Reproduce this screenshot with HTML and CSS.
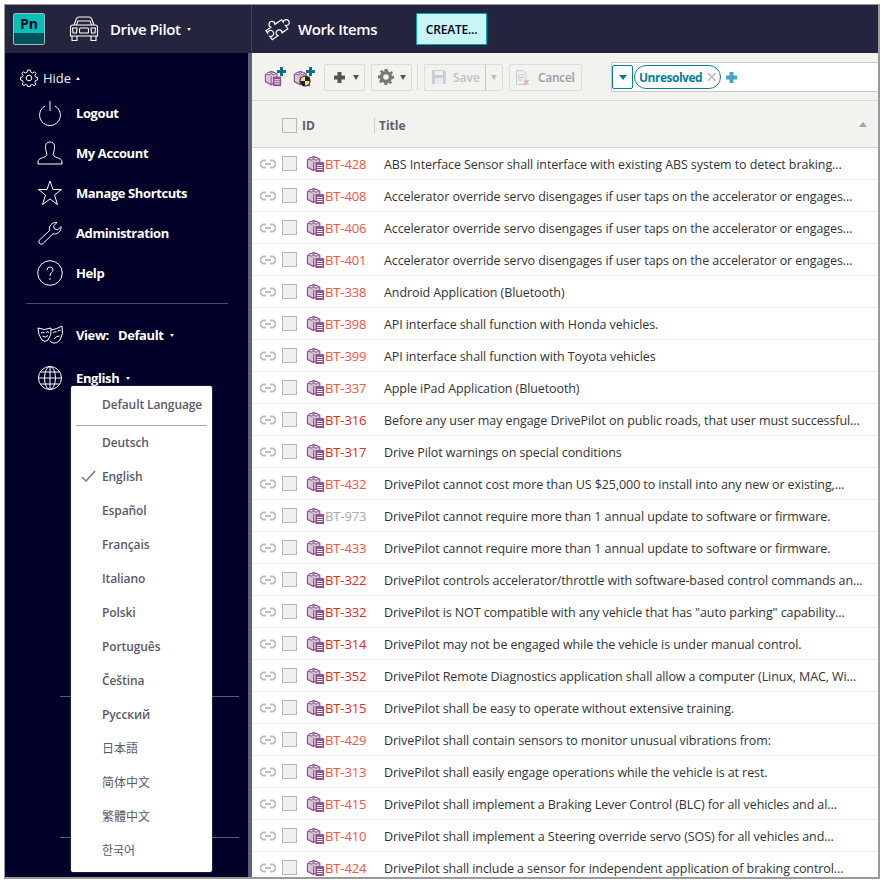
FILE: index.html
```html
<!DOCTYPE html>
<html lang="en">

<head>
    <meta charset="UTF-8">
    <title>Work Items</title>
    <link rel="stylesheet" href="styles.css">
</head>

<body>
    <svg class="defs" width="0" height="0">
        <symbol id="block" viewBox="0 0 20 20">
            <path d="M1.5 6 L8 2.5 L14.5 5.5 V13 L8 17.5 L1.5 14 Z" fill="#d9c4da" stroke="#8a4f8c" stroke-width="1.2" />
            <ellipse cx="5.5" cy="5" rx="2.3" ry="1.4" fill="#eadfeb" stroke="#8a4f8c" />
            <ellipse cx="10.5" cy="5" rx="2.3" ry="1.4" fill="#eadfeb" stroke="#8a4f8c" />
            <path d="M8 8 V17" stroke="#8a4f8c" />
            <rect x="10" y="8.5" width="9" height="10.5" fill="#8a4f8c" />
            <path d="M11.5 12 H17.5 M11.5 14.2 H17.5 M11.5 16.4 H17.5" stroke="#fff" />
        </symbol>
        <symbol id="link" viewBox="0 0 16 10">
            <path d="M6 1.5 H4 A3.2 3.2 0 0 0 4 8.5 H6 M10 1.5 H12 A3.2 3.2 0 0 1 12 8.5 H10 M5 5 H11" fill="none" stroke="#bdbdbd" stroke-width="2" />
        </symbol>
    </svg>

    <div class="frame">
        <header class="topbar">
            <div class="top_left">
                <div class="logo"><span>Pn</span></div>
                <svg class="car" width="30" height="26" viewBox="0 0 30 26" fill="none" stroke="#fff" stroke-width="1.1">
                    <path d="M5 9 L7.500 2.500 Q8 1 10 1 H20 Q22 1 22.500 2.500 L25 9" />
                    <path d="M1.500 11 Q1.500 9 4 9 H26 Q28.500 9 28.500 11 V20 H1.500 Z" />
                    <path d="M3 20 V24.500 H8 V20 M22 20 V24.500 H27 V20 M7.500 9 L9 5 H21 L22.500 9" />
                    <path d="M3.500 12 H8 L7.500 17 H4 Z M26.500 12 H22 L22.500 17 H26 Z" />
                    <rect x="10.500" y="12" width="9" height="5" rx="1" />
                </svg>
                <span class="project">Drive Pilot</span>
                <i class="caret"></i>
            </div>
            <div class="top_right">
                <svg width="30" height="28" viewBox="0 0 30 28" fill="none" stroke="#fff" stroke-width="1.200">
                    <path transform="rotate(-35 15 14)" d="M5 9 H11 a3 3 0 1 1 5 0 H24 V12 a3 3 0 1 1 0 4 V20 H17 a3 3 0 1 0 -5 0 H5 V16 a3 3 0 1 0 0 -4 Z" />
                </svg>
                <span class="page_title">Work Items</span>
                <button class="btn_create">CREATE...</button>
            </div>
        </header>

        <div class="body">
            <nav class="sidebar">
                <div class="nav_inner">
                    <div class="hide_row">
                        <svg width="18" height="18" viewBox="0 0 18 18" fill="none" stroke="#fff" stroke-width="1">
                            <circle cx="9" cy="9" r="2.8" />
                            <path d="M7.6 1 H10.4 L10.9 3.3 L12.6 4 L14.6 2.8 L16.2 4.6 L14.9 6.5 L15.6 8 L17.5 8.6 V11 L15.4 11.6 L14.8 13.2 L15.9 15.2 L14 16.6 L12.2 15.3 L10.7 16 L10.3 17.5 H7.7 L7.3 16 L5.8 15.3 L4 16.6 L2.1 15.2 L3.2 13.2 L2.6 11.6 L.5 11 V8.6 L2.4 8 L3.1 6.5 L1.8 4.6 L3.4 2.8 L5.4 4 L7.1 3.3 Z" />
                        </svg>
                        <span>Hide</span>
                        <i class="caret caret_up"></i>
                    </div>

                    <a class="nav_item" href="#">
                        <span class="nav_icon">
                            <svg width="24" height="26" viewBox="0 0 24 26" fill="none" stroke="#fff" stroke-width="1">
                                <path d="M7 6 A10.4 10.4 0 1 0 17 6" />
                                <path d="M12 1 V11" />
                            </svg>
                        </span>
                        Logout
                    </a>
                    <a class="nav_item" href="#">
                        <span class="nav_icon">
                            <svg width="26" height="24" viewBox="0 0 26 24" fill="none" stroke="#fff" stroke-width="1">
                                <path d="M13 1 C8 1 8 6 9 10 C10 13 10 14 9 15 C7 17 1 17 1 21 V23 H25 V21 C25 17 19 17 17 15 C16 14 16 13 17 10 C18 6 18 1 13 1 Z" />
                            </svg>
                        </span>
                        My Account
                    </a>
                    <a class="nav_item" href="#">
                        <span class="nav_icon">
                            <svg width="24" height="26" viewBox="0 0 24 26" fill="none" stroke="#fff" stroke-width="1">
                                <path d="M12 1 L15 9.5 H23.5 L16.5 15 L19.5 24.5 L12 19 L4.5 24.5 L7.5 15 L.5 9.5 H9 Z" />
                            </svg>
                        </span>
                        Manage Shortcuts
                    </a>
                    <a class="nav_item" href="#">
                        <span class="nav_icon">
                            <svg width="24" height="24" viewBox="0 0 24 24" fill="none" stroke="#fff" stroke-width="1">
                                <path d="M1 19.5 L11.5 9.5 C10.5 5 14 1 19 1.5 L15.5 5 L16.5 8 L19.5 9 L23 5.5 C23.5 10 19.5 14 15 12.8 L4.5 23 Q3 23.5 1.5 22.5 Q.5 21 1 19.5 Z" />
                            </svg>
                        </span>
                        Administration
                    </a>
                    <a class="nav_item" href="#">
                        <span class="nav_icon">
                            <svg width="26" height="26" viewBox="0 0 26 26" fill="none" stroke="#fff" stroke-width="1">
                                <circle cx="13" cy="13" r="12.3" />
                                <path d="M10 10 Q10 7 13 7 Q16 7 16 10 Q16 11.5 14.5 12.5 Q13 13.5 13 16" />
                                <path d="M13 18 V20" />
                            </svg>
                        </span>
                        Help
                    </a>

                    <div class="nav_sep"></div>

                    <a class="nav_item nav_view" href="#">
                        <span class="nav_icon">
                            <svg width="26" height="20" viewBox="0 0 26 20" fill="none" stroke="#fff" stroke-width="1">
                                <path d="M1 3 Q7 6 14 3 Q15 10 11 15 Q8 18 5 15 Q1 10 1 3 Z" />
                                <path d="M14 5 Q20 4 25 1 Q27 9 23 15 Q20 19 16 18 Q14 17.500 13 15.500" />
                                <path d="M4 8 Q6 6.500 7.500 8 M9 7.500 Q11 6 12 7.500 M16 8 Q18 6 19.500 7 M20.500 6.500 Q22 4.500 23.500 5.500 M5.500 11 Q8 13.500 11 10.500 M17 14 Q19 11 22.500 11" />
                            </svg>
                        </span>
                        <span class="view_label">View:</span>
                        Default
                        <i class="caret"></i>
                    </a>
                    <a class="nav_item nav_lang" href="#">
                        <span class="nav_icon">
                            <svg width="24" height="24" viewBox="0 0 24 24" fill="none" stroke="#fff" stroke-width="1">
                                <circle cx="12" cy="12" r="11.500" />
                                <ellipse cx="12" cy="12" rx="5.500" ry="11.500" />
                                <path d="M12 .5 V23.500 M.5 12 H23.500 M2.500 6 H21.500 M2.500 18 H21.500" />
                            </svg>
                        </span>
                        English
                        <i class="caret"></i>
                    </a>

                    <div class="nav_sep_short nav_sep_a"></div>
                    <div class="nav_sep_short nav_sep_b"></div>
                </div>
                <div class="nav_scroll"></div>

                <ul class="lang_menu">
                    <li class="lang_default">Default Language</li>
                    <li class="lang_sep"></li>
                    <li>Deutsch</li>
                    <li class="lang_checked">
                        <svg width="15" height="12" viewBox="0 0 15 12" fill="none" stroke="#777" stroke-width="1.500">
                            <path d="M1 7 L5 11 L14 1" />
                        </svg>
                        English
                    </li>
                    <li>Español</li>
                    <li>Français</li>
                    <li>Italiano</li>
                    <li>Polski</li>
                    <li>Português</li>
                    <li>Čeština</li>
                    <li>Русский</li>
                    <li class="lang_cjk" lang="ja">日本語</li>
                    <li class="lang_cjk" lang="zh-CN">简体中文</li>
                    <li class="lang_cjk" lang="zh-TW">繁體中文</li>
                    <li class="lang_cjk" lang="ko">한국어</li>
                </ul>
            </nav>

            <main class="main">
                <div class="toolbar">
                    <svg class="tool_icon" width="22" height="20" viewBox="0 0 22 20">
                        <use href="#block" width="18" height="18" y="2" />
                        <path d="M16 0 H19 V3 H22 V6 H19 V9 H16 V6 H13 V3 H16 Z" fill="#0b6f8c" />
                    </svg>
                    <svg class="tool_icon tool_icon2" width="22" height="20" viewBox="0 0 22 20">
                        <use href="#block" width="18" height="18" y="2" />
                        <circle cx="12" cy="14" r="5" fill="#f5e07a" stroke="#222" />
                        <path d="M12 14 V9 A5 5 0 0 1 17 14 Z M12 14 V19 A5 5 0 0 1 7 14 Z" fill="#222" />
                        <path d="M16 0 H19 V3 H22 V6 H19 V9 H16 V6 H13 V3 H16 Z" fill="#0b6f8c" />
                    </svg>

                    <button class="tool_btn tool_add">
                        <svg width="11" height="11" viewBox="0 0 11 11">
                            <path d="M3.500 0 H7.500 V3.500 H11 V7.500 H7.500 V11 H3.500 V7.500 H0 V3.500 H3.500 Z" fill="#555" />
                        </svg>
                        <i class="caret caret_dark"></i>
                    </button>
                    <button class="tool_btn tool_gear">
                        <svg width="16" height="16" viewBox="0 0 16 16">
                            <path d="M6.500 0 H9.500 L10 2.300 L12 3.200 L14 1.900 L14.900 4 L13.400 5.500 L14 7 L16 6.500 V9.500 L13.800 10 L13 12 L14.200 14 L12 14.900 L10.300 13.500 L9.500 14 L9.500 16 H6.500 L6 13.800 L4 13 L2 14.200 L1.100 12 L2.600 10.300 L2 9.500 L0 9.500 V6.500 L2.200 6 L3 4 L1.800 2 L4 1.100 L5.700 2.600 L6.500 2.200 Z" fill="#777" />
                            <circle cx="8" cy="8" r="2.800" fill="#f2f2ef" />
                        </svg>
                        <i class="caret caret_dark"></i>
                    </button>
                    <span class="tool_sep"></span>

                    <div class="split_btn">
                        <button class="tool_btn tool_off tool_save">
                            <svg width="14" height="14" viewBox="0 0 14 14">
                                <path d="M0 0 H12 L14 2 V14 H0 Z" fill="#c8d0d6" />
                                <rect x="3" y="1" width="8" height="4" fill="#f2f2ef" />
                                <rect x="3" y="8" width="8" height="6" fill="#e8ebee" />
                            </svg>
                            Save
                        </button>
                        <button class="tool_btn tool_off tool_more"><i class="caret caret_off"></i></button>
                    </div>
                    <button class="tool_btn tool_off tool_cancel">
                        <svg width="13" height="15" viewBox="0 0 13 15">
                            <path d="M.500 .500 H7 L10 3.500 V14.500 H.500 Z" fill="#eef0f2" stroke="#c3ccd2" />
                            <path d="M2 5 H8 M2 7.500 H8 M2 10 H6" stroke="#c3ccd2" />
                            <path d="M8 10 L12.500 14.500 M12.500 10 L8 14.500" stroke="#e3a8a0" stroke-width="1.300" />
                        </svg>
                        Cancel
                    </button>

                    <div class="filter">
                        <span class="filter_drop"><i></i></span>
                        <span class="chip">Unresolved <b>&times;</b></span>
                        <svg width="11" height="11" viewBox="0 0 11 11">
                            <path d="M3.500 0 H7.500 V3.500 H11 V7.500 H7.500 V11 H3.500 V7.500 H0 V3.500 H3.500 Z" fill="#4aa3c2" />
                        </svg>
                    </div>
                </div>

                <div class="table_head">
                    <span class="check"></span>
                    <span class="col_id">ID</span>
                    <span class="col_title">Title</span>
                    <i class="sort_up"></i>
                </div>

                <ul class="rows" id="rows"></ul>
            </main>
        </div>
    </div>

    <script>
        let aRows = [
            ['BT-428', 'ABS Interface Sensor shall interface with existing ABS system to detect braking...'],
            ['BT-408', 'Accelerator override servo disengages if user taps on the accelerator or engages...'],
            ['BT-406', 'Accelerator override servo disengages if user taps on the accelerator or engages...'],
            ['BT-401', 'Accelerator override servo disengages if user taps on the accelerator or engages...'],
            ['BT-338', 'Android Application (Bluetooth)'],
            ['BT-398', 'API interface shall function with Honda vehicles.'],
            ['BT-399', 'API interface shall function with Toyota vehicles'],
            ['BT-337', 'Apple iPad Application (Bluetooth)'],
            ['BT-316', 'Before any user may engage DrivePilot on public roads, that user must successful...', 'strong'],
            ['BT-317', 'Drive Pilot warnings on special conditions', 'strong'],
            ['BT-432', 'DrivePilot cannot cost more than US $25,000 to install into any new or existing,...'],
            ['BT-973', 'DrivePilot cannot require more than 1 annual update to software or firmware.', 'grey'],
            ['BT-433', 'DrivePilot cannot require more than 1 annual update to software or firmware.'],
            ['BT-322', 'DrivePilot controls accelerator/throttle with software-based control commands an...', 'strong'],
            ['BT-332', 'DrivePilot is NOT compatible with any vehicle that has "auto parking" capability...', 'strong'],
            ['BT-314', 'DrivePilot may not be engaged while the vehicle is under manual control.', 'strong'],
            ['BT-352', 'DrivePilot Remote Diagnostics application shall allow a computer (Linux, MAC, Wi...', 'strong'],
            ['BT-315', 'DrivePilot shall be easy to operate without extensive training.', 'strong'],
            ['BT-429', 'DrivePilot shall contain sensors to monitor unusual vibrations from:'],
            ['BT-313', 'DrivePilot shall easily engage operations while the vehicle is at rest.'],
            ['BT-415', 'DrivePilot shall implement a Braking Lever Control (BLC) for all vehicles and al...'],
            ['BT-410', 'DrivePilot shall implement a Steering override servo (SOS) for all vehicles and...'],
            ['BT-424', 'DrivePilot shall include a sensor for independent application of braking control...']
        ];

        let oRows = document.getElementById('rows');

        aRows.forEach(row => {
            let oLi = document.createElement('li');
            oLi.innerHTML = `
                <svg class="row_link" width="16" height="10"><use href="#link" /></svg>
                <span class="check"></span>
                <svg class="row_icon" width="19" height="19"><use href="#block" /></svg>
                <span class="row_id ${row[2] || ''}">${row[0]}</span>
                <span class="row_title"></span>`;
            oLi.querySelector('.row_title').textContent = row[1];
            oRows.appendChild(oLi);
        });
    </script>
</body>

</html>
```

FILE: styles.css
```css
* {
    margin: 0;
    padding: 0;
    box-sizing: border-box;
    list-style: none;
}

html,
body {
    height: 100%;
    overflow: hidden;
}

body {
    padding: 4px;
    background: white;
    font-family: "Open Sans", "Noto Sans CJK JP", sans-serif;
    font-size: 13px;
    color: #333;
}

a {
    text-decoration: none;
}

button {
    font-family: inherit;
}

.defs {
    position: absolute;
}

.frame {
    height: 875px;
    border: 1px solid #9a9a9a;
    border-right-width: 2px;
    border-bottom-width: 2px;
    display: flex;
    flex-direction: column;
    overflow: hidden;
}

/* top bar */
.topbar {
    height: 48px;
    flex: none;
    display: flex;
    background: #24243e;
    color: white;
}

.top_left {
    width: 247px;
    display: flex;
    align-items: center;
    padding-left: 8px;
    border-right: 1px solid #44445a;
}

.logo {
    width: 32px;
    height: 32px;
    border: 1px solid #9fb8b8;
    border-radius: 2px;
    background: linear-gradient(#00c1b6 0, #00c1b6 65%, #005159 65%);
    color: #000028;
    font-weight: 700;
    font-size: 14px;
    text-align: center;
    line-height: 20px;
}

.car {
    margin-left: 24px;
}

.project {
    margin-left: 11px;
    font-size: 15px;
    font-weight: 600;
    letter-spacing: -.4px;
}

.caret {
    display: inline-block;
    width: 0;
    height: 0;
    margin-left: 7px;
    border-style: solid;
    border-color: white transparent transparent;
    border-width: 3px 2.500px 0;
}

.caret_up {
    border-color: transparent transparent white;
    border-width: 0 2.500px 3px;
}

.caret_dark {
    margin: 0;
    border-top-color: #555;
    border-width: 5px 3px 0;
}

.caret_off {
    margin: 0;
    border-top-color: #bbb;
    border-width: 5px 3px 0;
}

.top_right {
    flex: 1;
    display: flex;
    align-items: center;
    padding-left: 10px;
}

.page_title {
    margin-left: 6px;
    font-size: 15px;
    font-weight: 600;
    letter-spacing: -.4px;
}

.btn_create {
    margin-left: 39px;
    width: 71px;
    height: 32px;
    border: 1px solid #00a8a8;
    border-radius: 1px;
    background: #c8f5f5;
    color: #000028;
    font-size: 12px;
    font-weight: 600;
    letter-spacing: -.2px;
}

/* sidebar */
.body {
    flex: 1;
    display: flex;
    min-height: 0;
}

.sidebar {
    width: 247px;
    flex: none;
    position: relative;
    display: flex;
}

.nav_inner {
    flex: 1;
    background: #000028;
    position: relative;
    padding-top: 15px;
}

.nav_scroll {
    width: 4px;
    background: #5f5f78;
}

.hide_row {
    height: 20px;
    display: flex;
    align-items: center;
    padding-left: 15px;
    color: #f2f2f2;
    font-size: 13px;
}

.hide_row span {
    margin-left: 5px;
}

.hide_row .caret {
    margin-left: 5px;
}

.nav_item {
    height: 40px;
    display: flex;
    align-items: center;
    color: white;
    font-weight: 700;
    font-size: 13px;
    letter-spacing: -.4px;
}

.hide_row + .nav_item {
    margin-top: 5px;
}

.nav_icon {
    width: 26px;
    flex: none;
    display: flex;
    justify-content: center;
    margin-left: 32px;
    margin-right: 13px;
}

.view_label {
    margin-right: 9px;
}

.nav_sep {
    height: 1px;
    margin: 10px 20px 0 21px;
    background: #4a4a63;
}

.nav_view {
    margin-top: 11px;
}

.nav_lang {
    margin-top: 3px;
}

.nav_sep_short {
    position: absolute;
    left: 55px;
    right: 9px;
    height: 1px;
    background: #5a5a70;
}

.nav_sep_a {
    top: 643px;
}

.nav_sep_b {
    top: 784px;
}

/* language menu */
.lang_menu {
    position: absolute;
    left: 66px;
    top: 333px;
    width: 141px;
    height: 486px;
    background: white;
    border-radius: 2px;
    box-shadow: 0 0 2px rgba(120, 120, 150, .9);
    font-size: 12px;
    font-weight: 600;
    letter-spacing: -.1px;
    color: #5a5a68;
    z-index: 2;
}

.lang_menu li {
    height: 34px;
    line-height: 34px;
    padding-left: 31px;
    position: relative;
    white-space: nowrap;
}

.lang_menu .lang_default {
    height: 39px;
    line-height: 38px;
}

.lang_menu .lang_sep {
    height: 1px;
    margin: 0 5px 0 5px;
    padding: 0;
    background: #a8a8a8;
}

.lang_menu .lang_cjk {
    font-weight: 400;
    letter-spacing: 0;
}

.lang_checked svg {
    position: absolute;
    left: 10px;
    top: 10px;
}

/* toolbar */
.main {
    flex: 1;
    min-width: 0;
    display: flex;
    flex-direction: column;
    background: white;
}

.toolbar {
    height: 48px;
    flex: none;
    display: flex;
    align-items: center;
    padding: 1px 0 0 12px;
    background: #f2f2ef;
    border-bottom: 1px solid #d8d8d8;
}

.tool_icon2 {
    margin-left: 7px;
}

.tool_btn {
    height: 27px;
    display: flex;
    align-items: center;
    background: #f2f2ef;
    border: 1px solid #dcdcd8;
    border-radius: 2px;
    font-size: 12px;
    font-weight: 600;
}

.tool_add {
    width: 41px;
    margin-left: 9px;
    padding-left: 9px;
    gap: 8px;
}

.tool_gear {
    width: 41px;
    margin-left: 6px;
    padding-left: 6px;
    gap: 6px;
}

.tool_sep {
    width: 1px;
    height: 25px;
    margin: 0 6px 0 5px;
    background: #d8d8d8;
}

.split_btn {
    display: flex;
}

.tool_off {
    color: #bcc0c6;
}

.tool_save {
    border-right: 0;
    border-radius: 2px 0 0 2px;
    width: 61px;
    padding-left: 7px;
    gap: 7px;
}

.tool_more {
    width: 18px;
    padding-left: 5px;
    border-left-color: #c4c4c4;
    border-radius: 0 2px 2px 0;
}

.tool_cancel {
    margin-left: 6px;
    width: 73px;
    padding-left: 6px;
    gap: 9px;
    color: #9a9aa8;
    letter-spacing: -.3px;
}

.filter {
    margin-left: 29px;
    flex: 1;
    height: 30px;
    display: flex;
    align-items: center;
    background: white;
    border: 1px solid #c8c8c8;
    border-right: 0;
    border-radius: 2px 0 0 2px;
}

.filter_drop {
    width: 21px;
    height: 24px;
    display: flex;
    align-items: center;
    justify-content: center;
    border: 1px solid #0b7e96;
    border-radius: 2px;
}

.filter_drop i {
    width: 0;
    height: 0;
    border: 4.500px solid transparent;
    border-top: 5px solid #0b7e96;
    border-bottom: 0;
}

.chip {
    margin-left: 1px;
    margin-right: 5px;
    height: 24px;
    width: 87px;
    display: flex;
    align-items: center;
    justify-content: space-between;
    padding: 0 3px 0 4px;
    border: 1px solid #0b7e96;
    border-radius: 12px;
    color: #0b7e96;
    font-size: 12px;
    font-weight: 700;
    letter-spacing: -.5px;
}

.chip b {
    color: #b8b8b8;
    font-size: 20px;
    font-weight: 400;
    line-height: 20px;
}

/* table */
.table_head {
    height: 47px;
    flex: none;
    display: flex;
    align-items: center;
    padding: 2px 0 0 30px;
    background: #f2f2ef;
    border-bottom: 1px solid #d4d4d4;
    position: relative;
    font-weight: 700;
    font-size: 12px;
    color: #5a5f6a;
}

.check {
    width: 15px;
    height: 15px;
    flex: none;
    background: #f0f0f0;
    border: 1px solid #b8b8b8;
}

.col_id {
    margin-left: 5px;
    width: 72px;
}

.col_title {
    padding-left: 4px;
    border-left: 1px solid #ccc;
    line-height: 15px;
}

.sort_up {
    position: absolute;
    right: 11px;
    top: 21px;
    width: 0;
    height: 0;
    border: 4.500px solid transparent;
    border-bottom: 5px solid #9aa4b4;
    border-top: 0;
}

.rows {
    flex: 1;
    overflow: hidden;
}

.rows li {
    height: 32px;
    display: flex;
    align-items: center;
    border-bottom: 1px solid #ececec;
    white-space: nowrap;
    overflow: hidden;
}

.row_link {
    margin-left: 8px;
    margin-right: 6px;
    flex: none;
}

.row_icon {
    margin-left: 9px;
    flex: none;
}

.row_id {
    width: 59px;
    flex: none;
    color: #f05545;
    font-size: 13px;
    letter-spacing: -.1px;
}

.row_id.strong {
    color: #e32b1c;
}

.row_id.grey {
    color: #a9a9a9;
}

.row_title {
    padding-top: 1px;
    color: #333;
    font-size: 12.500px;
    letter-spacing: -.09px;
}
```
